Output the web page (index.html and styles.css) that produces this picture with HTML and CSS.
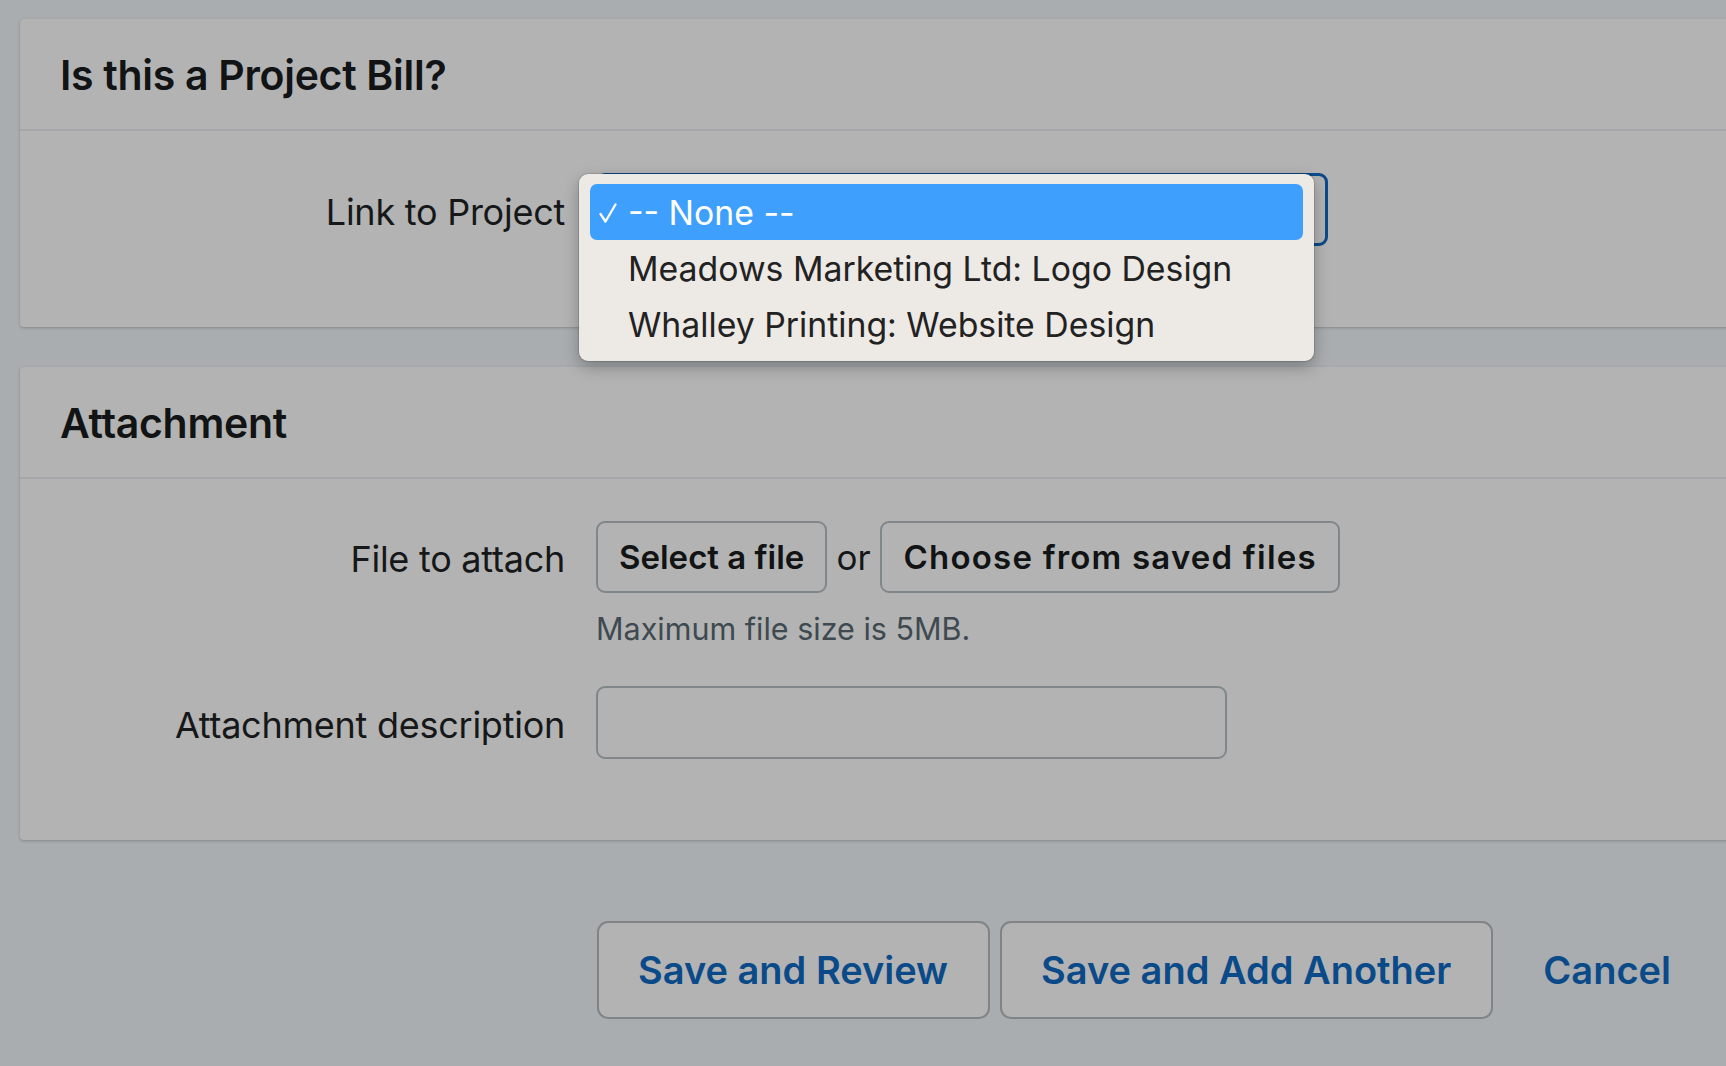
FILE: index.html
```html
<!DOCTYPE html>
<html lang="en">
<head>
<meta charset="utf-8">
<title>Bill</title>
<link rel="stylesheet" href="styles.css">
</head>
<body>
<div class="page">
  <section class="card">
    <header class="card-head"><h2 class="card-title">Is this a Project Bill?</h2></header>
    <div class="card-body card-body-1">
      <div class="form-grid">
        <label class="label">Link to Project</label>
        <div class="control select-wrap">
          <div class="select"></div>
          <ul class="popup">
            <li class="opt opt-active"><svg class="check" width="18" height="20" viewBox="0 0 18 20"><path d="M1.5 11 L6.5 18.5 L16.5 1.5" fill="none" stroke="#ffffff" stroke-width="2.3" stroke-linecap="round" stroke-linejoin="round"/></svg>-- None --</li>
            <li class="opt">Meadows Marketing Ltd: Logo Design</li>
            <li class="opt">Whalley Printing: Website Design</li>
          </ul>
        </div>
      </div>
    </div>
  </section>

  <section class="card card-2">
    <header class="card-head"><h2 class="card-title">Attachment</h2></header>
    <div class="card-body card-body-2">
      <div class="form-grid">
        <label class="label">File to attach</label>
        <div class="control file-row">
          <button class="btn-file" type="button">Select a file</button>
          <span class="or">or</span>
          <button class="btn-file btn-file-wide" type="button">Choose from saved files</button>
        </div>
        <div class="spacer"></div>
        <p class="help">Maximum file size is 5MB.</p>
        <label class="label label-desc">Attachment description</label>
        <div class="control"><input class="text-input" type="text"></div>
      </div>
    </div>
  </section>

  <div class="actions">
    <button class="btn-action" type="button">Save and Review</button>
    <button class="btn-action" type="button">Save and Add Another</button>
    <a class="cancel" href="#">Cancel</a>
  </div>
</div>
</body>
</html>
```

FILE: styles.css
```css
html, body {
  margin: 0;
  padding: 0;
}
body {
  background: #a9adb0;
  font-family: Inter, "Liberation Sans", sans-serif;
  color: #111314;
  overflow: hidden;
  width: 1726px;
  height: 1066px;
}
.page {
  padding: 19px 0 0 20px;
}
.card {
  background: #b3b3b3;
  border-radius: 4px 0 0 4px;
  margin-right: -40px;
  box-shadow: 0 1px 3px rgba(0, 0, 0, 0.22);
}
.card-2 {
  margin-top: 40px;
}
.card-head {
  height: 110px;
  border-bottom: 2px solid #a4a6aa;
  display: flex;
  align-items: center;
  padding-left: 40px;
}
.card-title {
  margin: 0;
  font-size: 41px;
  font-weight: 600;
  line-height: 1;
  color: #111314;
  letter-spacing: -0.3px;
  position: relative;
  top: 1px;
}
.card-body-1 {
  padding: 42px 0 81px 0;
}
.card-body-2 {
  padding: 42px 0 81px 0;
}
.form-grid {
  display: grid;
  grid-template-columns: 545px 1fr;
  column-gap: 31px;
  align-items: center;
}
.label {
  text-align: right;
  font-size: 36px;
  line-height: 44px;
  letter-spacing: -0.25px;
  color: #151718;
  position: relative;
  top: 2px;
}
.control {
  display: flex;
  align-items: center;
}
.select-wrap {
  position: relative;
}
.select {
  width: 732px;
  height: 73px;
  box-sizing: border-box;
  border: 3px solid #0b4a8a;
  border-radius: 9px;
}
.popup {
  position: absolute;
  left: -17px;
  top: 1px;
  width: 735px;
  margin: 0;
  padding: 10px 0 9px 0;
  list-style: none;
  box-sizing: border-box;
  background: #ede9e5;
  border-radius: 9px;
  box-shadow: 0 0 0 1px rgba(0, 0, 0, 0.12), 0 6px 16px rgba(0, 0, 0, 0.28);
  font-family: Inter, "Liberation Sans", sans-serif;
}
.opt {
  position: relative;
  height: 56px;
  margin: 0 11px;
  padding-left: 38px;
  display: flex;
  align-items: center;
  font-size: 33.8px;
  color: #222222;
  border-radius: 7px;
  white-space: nowrap;
}
.opt-active {
  background: #3e9ffd;
  color: #ffffff;
}
.check {
  position: absolute;
  left: 9px;
  top: 19px;
}
.file-row {
  gap: 0;
}
.btn-file {
  height: 72px;
  box-sizing: border-box;
  padding: 0 21px;
  border: 2px solid #80878b;
  border-radius: 9px;
  background: transparent;
  font-family: Inter, "Liberation Sans", sans-serif;
  font-size: 33px;
  font-weight: 600;
  color: #111314;
  white-space: nowrap;
}
.btn-file-wide {
  letter-spacing: 1.2px;
  padding: 0 21px 0 22px;
}
.or {
  font-size: 35px;
  color: #151718;
  margin: 0 9px 0 9px;
}
.spacer {
  height: 1px;
}
.help {
  margin: 16px 0 37px 0;
  font-size: 30.5px;
  line-height: 40px;
  color: #3e4a50;
}
.text-input {
  width: 631px;
  height: 73px;
  box-sizing: border-box;
  border: 2px solid #80878b;
  border-radius: 9px;
  background: transparent;
  font-family: Inter, "Liberation Sans", sans-serif;
  font-size: 33px;
  padding: 0 16px;
  outline: none;
}
.actions {
  display: flex;
  align-items: center;
  margin-top: 81px;
  padding-left: 577px;
  gap: 10px;
}
.btn-action {
  height: 98px;
  box-sizing: border-box;
  padding: 0 40px 0 39px;
  border: 2px solid #7f8488;
  border-radius: 11px;
  background: #b3b3b3;
  font-family: Inter, "Liberation Sans", sans-serif;
  font-size: 38px;
  font-weight: 600;
  color: #0b4a89;
  white-space: nowrap;
}
.cancel {
  margin-left: 40px;
  font-size: 38px;
  font-weight: 600;
  color: #0b4a89;
  text-decoration: none;
}
```
